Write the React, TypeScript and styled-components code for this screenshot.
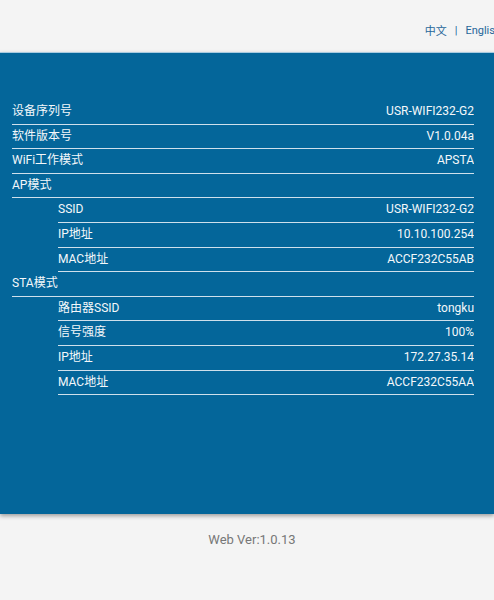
import React from "react";
import styled, { createGlobalStyle } from "styled-components";

const GlobalStyle = createGlobalStyle`
  html, body {
    margin: 0;
    padding: 0;
    background: #f4f4f4;
    font-family: Roboto, "Noto Sans CJK SC", sans-serif;
  }
`;

const Page = styled.div`
  width: 494px;
  height: 600px;
  display: flex;
  flex-direction: column;
  overflow: hidden;
  background: #f4f4f4;
`;

const Header = styled.header`
  height: 52px;
  display: flex;
  justify-content: flex-end;
  align-items: center;
  padding-top: 8px;
  box-sizing: border-box;
  overflow: hidden;
`;

const LangNav = styled.nav`
  display: flex;
  align-items: center;
  gap: 8px;
  margin-right: -7px;
  font-size: 11px;
  color: #27679a;
  white-space: nowrap;
`;

const LangLink = styled.span`
  cursor: pointer;
`;

const Panel = styled.main`
  height: 462px;
  background: #04669a;
  border-top: 1px solid #a9cbe0;
  box-shadow: 0 2px 4px rgba(0, 0, 0, 0.35);
  padding: 47px 20px 0 12px;
  box-sizing: border-box;
  color: #f4f8fa;
  font-size: 12px;
`;

const List = styled.div`
  display: flex;
  flex-direction: column;
`;

const Row = styled.div<{ $indent?: boolean }>`
  display: flex;
  justify-content: space-between;
  align-items: baseline;
  height: 24.6px;
  line-height: 24px;
  margin-left: ${({ $indent }) => ($indent ? "46px" : "0")};
  border-bottom: 1px solid #cfe0ec;
  box-sizing: border-box;
  overflow: hidden;
`;

const Label = styled.span`
  line-height: 22px;
`;

const Value = styled.span`
  line-height: 22px;
`;

const Footer = styled.footer`
  padding: 18px 0 0 10px;
  text-align: center;
  font-size: 13px;
  color: #777;
`;

type Item = { label: string; value?: string; indent?: boolean };

const items: Item[] = [
  { label: "设备序列号", value: "USR-WIFI232-G2" },
  { label: "软件版本号", value: "V1.0.04a" },
  { label: "WiFi工作模式", value: "APSTA" },
  { label: "AP模式" },
  { label: "SSID", value: "USR-WIFI232-G2", indent: true },
  { label: "IP地址", value: "10.10.100.254", indent: true },
  { label: "MAC地址", value: "ACCF232C55AB", indent: true },
  { label: "STA模式" },
  { label: "路由器SSID", value: "tongku", indent: true },
  { label: "信号强度", value: "100%", indent: true },
  { label: "IP地址", value: "172.27.35.14", indent: true },
  { label: "MAC地址", value: "ACCF232C55AA", indent: true },
];

export default function App() {
  return (
    <Page>
      <GlobalStyle />
      <Header>
        <LangNav>
          <LangLink>中文</LangLink>
          <span>|</span>
          <LangLink>English</LangLink>
        </LangNav>
      </Header>
      <Panel>
        <List>
          {items.map((item, i) => (
            <Row key={i} $indent={item.indent}>
              <Label>{item.label}</Label>
              <Value>{item.value}</Value>
            </Row>
          ))}
        </List>
      </Panel>
      <Footer>Web Ver:1.0.13</Footer>
    </Page>
  );
}
